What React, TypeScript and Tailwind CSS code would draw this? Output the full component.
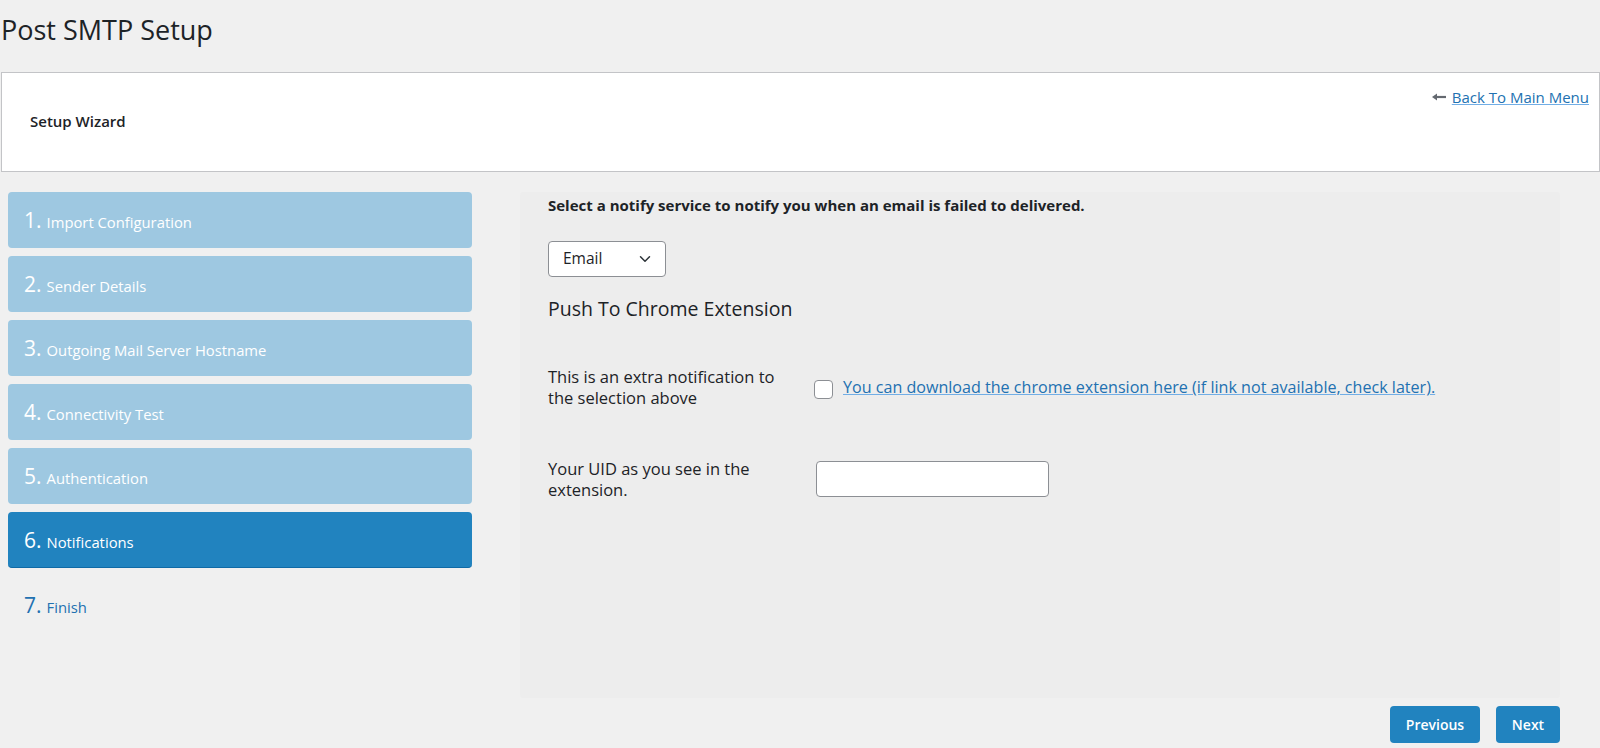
import { ChevronDown } from "lucide-react";

const steps = [
    { n: 1, label: "Import Configuration" },
    { n: 2, label: "Sender Details" },
    { n: 3, label: "Outgoing Mail Server Hostname" },
    { n: 4, label: "Connectivity Test" },
    { n: 5, label: "Authentication" },
    { n: 6, label: "Notifications", active: true },
    { n: 7, label: "Finish", plain: true },
];

export default function App() {
    return (
        <div className="min-h-[748px] bg-[#f0f0f0] font-['Open_Sans',sans-serif] text-[#1d2327]">
            <h1 className="pl-[1px] pt-[12px] text-[27px] leading-[36px] font-normal text-[#1d2327]">
                Post SMTP Setup
            </h1>

            <div className="mt-[24px] ml-px flex h-[100px] items-start justify-between border border-[#c3c4c7] bg-white">
                <div className="pl-[28px] pt-[38px] text-[15px] leading-[20px] font-semibold">
                    Setup Wizard
                </div>
                <div className="flex items-center pr-[10px] pt-[14px] text-[15px] leading-[20px]">
                    <svg width="14" height="8" viewBox="0 0 14 8" className="mr-[6px] text-[#646970]">
                        <path d="M0 4 L5 0.5 L5 7.5 Z" fill="currentColor" />
                        <path d="M4 4 H14" stroke="currentColor" strokeWidth="2.2" />
                    </svg>
                    <a href="#" className="text-[#2271b1] underline decoration-[#72aee6]">
                        Back To Main Menu
                    </a>
                </div>
            </div>

            <div className="flex items-start pt-[20px]">
                <ul className="ml-[8px] flex w-[464px] flex-col gap-[8.1px]">
                    {steps.map((s) => (
                        <li
                            key={s.n}
                            className={
                                "flex h-[56px] items-baseline rounded-[4px] pl-[16px] pt-[14px] " +
                                (s.plain
                                    ? "text-[#2271b1]"
                                    : s.active
                                      ? "border-b border-[#0f6aa6] bg-[#2183bf] text-white"
                                      : "bg-[#9ec8e1] text-white")
                            }
                        >
                            <span className="mr-[5px] text-[21px] leading-[28px]">{s.n}.</span>
                            <span className="text-[14.8px] leading-[20px]">{s.label}</span>
                        </li>
                    ))}
                </ul>

                <div className="ml-[48px] flex flex-col">
                    <div className="h-[506px] w-[1040px] rounded-[3px] bg-[#ededed] pl-[28px] pt-[3px]">
                        <p className="text-[15px] font-bold leading-[20px] text-[#1d2327]">
                            Select a notify service to notify you when an email is failed to delivered.
                        </p>

                        <div className="mt-[26px] flex h-[36px] w-[118px] items-center justify-between rounded-[4px] border border-[#8c8f94] bg-white pl-[14px] pr-[11px] text-[15.5px]">
                            <span>Email</span>
                            <ChevronDown className="h-[18px] w-[18px] text-[#2c3338]" strokeWidth={2} />
                        </div>

                        <h2 className="mt-[18px] text-[19.5px] leading-[28px] font-medium">
                            Push To Chrome Extension
                        </h2>

                        <div className="mt-[43px] flex items-start">
                            <div className="w-[266px] text-[16.5px] leading-[21px]">
                                This is an extra notification to
                                <br />
                                the selection above
                            </div>
                            <span className="mt-[14px] h-[19px] w-[19px] rounded-[4px] border border-[#8c8f94] bg-white" />
                            <a
                                href="#"
                                className="ml-[10px] mt-[11px] text-[16.1px] leading-[20px] text-[#2271b1] underline decoration-[#72aee6]"
                            >
                                You can download the chrome extension here (if link not available, check later).
                            </a>
                        </div>

                        <div className="mt-[50px] flex items-start">
                            <div className="w-[268px] text-[16.5px] leading-[21px]">
                                Your UID as you see in the
                                <br />
                                extension.
                            </div>
                            <input
                                type="text"
                                className="mt-[3px] h-[36px] w-[233px] rounded-[4px] border border-[#8c8f94] bg-white"
                            />
                        </div>
                    </div>

                    <div className="mt-[8px] flex justify-end gap-[16px]">
                        <button className="h-[37px] w-[90px] rounded-[4px] bg-[#2183bf] text-[14px] font-semibold text-white">
                            Previous
                        </button>
                        <button className="h-[37px] w-[64px] rounded-[4px] bg-[#2183bf] text-[14px] font-semibold text-white">
                            Next
                        </button>
                    </div>
                </div>
            </div>
        </div>
    );
}
